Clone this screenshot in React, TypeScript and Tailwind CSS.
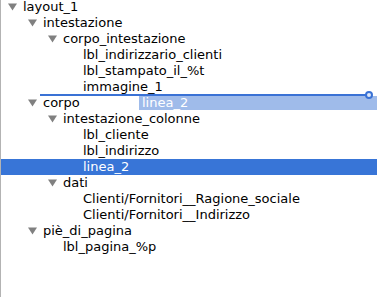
import React from "react";

type Node = { label: string; level: number; open?: boolean; selected?: boolean };

const rows: Node[] = [
  { label: "layout_1", level: 0, open: true },
  { label: "intestazione", level: 1, open: true },
  { label: "corpo_intestazione", level: 2, open: true },
  { label: "lbl_indirizzario_clienti", level: 3 },
  { label: "lbl_stampato_il_%t", level: 3 },
  { label: "immagine_1", level: 3 },
  { label: "corpo", level: 1, open: true },
  { label: "intestazione_colonne", level: 2, open: true },
  { label: "lbl_cliente", level: 3 },
  { label: "lbl_indirizzo", level: 3 },
  { label: "linea_2", level: 3, selected: true },
  { label: "dati", level: 2, open: true },
  { label: "Clienti/Fornitori__Ragione_sociale", level: 3 },
  { label: "Clienti/Fornitori__Indirizzo", level: 3 },
  { label: "piè_di_pagina", level: 1, open: true },
  { label: "lbl_pagina_%p", level: 2 },
];

// left padding for each depth (triangle column starts here)
const indent = ["pl-[7px]", "pl-[27px]", "pl-[47px]", "pl-[67px]"];

const Triangle = () => (
  <svg width="9" height="8" viewBox="0 0 9 8" className="shrink-0">
    <polygon points="0,0.5 9,0.5 4.5,7.5" fill="#808080" />
  </svg>
);

const Row: React.FC<{ node: Node }> = ({ node }) => (
  <div
    className={`flex h-4 items-center ${indent[node.level]} ${
      node.selected ? "bg-[#3875d7] text-white" : "text-black"
    }`}
  >
    <div className="w-[9px] shrink-0">{node.open && <Triangle />}</div>
    <span className="ml-[6px] whitespace-nowrap leading-4">{node.label}</span>
  </div>
);

export default function App() {
  return (
    <div
      className="relative h-[297px] w-[377px] overflow-hidden border-l border-[#b3b3b3] bg-white text-[13px]"
      style={{ fontFamily: '"DejaVu Sans", sans-serif' }}
    >
      <div className="-mt-px">
        {rows.map((r, i) => (
          <Row key={i} node={r} />
        ))}
      </div>

      {/* drag ghost */}
      <div className="absolute left-[138px] right-0 top-[96px] flex h-[14px] items-center bg-[#9fbbea] pl-[3px] leading-4 text-white">
        linea_2
      </div>

      {/* drop indicator */}
      <div className="absolute left-[39px] right-[10px] top-[94px] h-[2px] bg-[#3a72d5]" />
      <div className="absolute left-[364px] top-[91px] h-2 w-2 rounded-full border-2 border-[#3a72d5] bg-[#dfe8f8]" />
    </div>
  );
}
